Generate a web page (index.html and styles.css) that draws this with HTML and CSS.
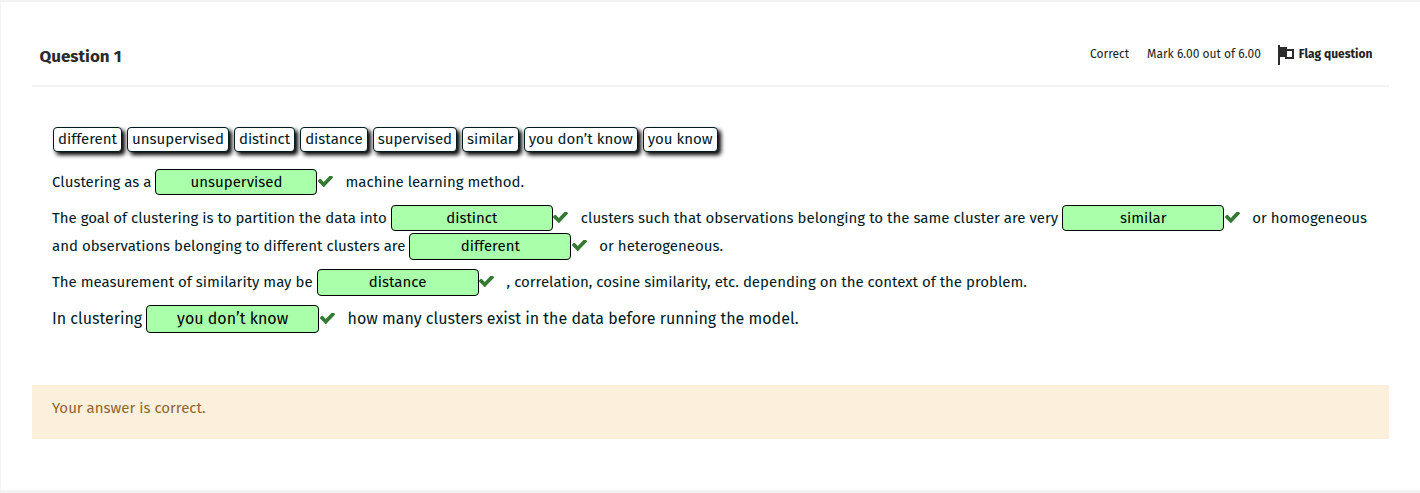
FILE: index.html
```
<!DOCTYPE html>
<html lang="en">
<head>
<meta charset="utf-8">
<title>Question 1</title>
<link rel="stylesheet" href="styles.css">
</head>
<body>
<svg class="defs" aria-hidden="true"><symbol id="check" viewBox="121 434 1550 1188" preserveAspectRatio="none"><path d="M1671 566q0 40-28 68l-724 724-136 136q-28 28-68 28t-68-28l-136-136-362-362q-28-28-28-68t28-68l136-136q28-28 68-28t68 28l294 295 656-657q28-28 68-28t68 28l136 136q28 28 28 68z" fill="#357a32"/></symbol></svg>
<main class="question">
  <header class="head">
    <h1 class="title">Question 1</h1>
    <div class="info">
      <span class="state">Correct</span>
      <span class="grade">Mark 6.00 out of 6.00</span>
      <a class="flag"><svg class="flag-icon" viewBox="0 0 16 20"><path d="M0 0H2V2H9V4H16V14H7V12H2V20H0Z" fill="#2b2b2b"/><path d="M9 6H14V12H9Z" fill="#fff"/></svg>Flag question</a>
    </div>
  </header>
  <section class="content">
    <div class="choices">
      <span class="choice">different</span>
      <span class="choice">unsupervised</span>
      <span class="choice">distinct</span>
      <span class="choice">distance</span>
      <span class="choice">supervised</span>
      <span class="choice">similar</span>
      <span class="choice">you don’t know</span>
      <span class="choice">you know</span>
    </div>
    <p class="line"><span>Clustering as a</span><span class="drop">unsupervised</span><svg class="check"><use href="#check"/></svg><span>machine learning method.</span></p>
    <div class="para">
      <p class="line"><span>The goal of clustering is to partition the data into</span><span class="drop">distinct</span><svg class="check"><use href="#check"/></svg><span>clusters such that observations belonging to the same cluster are very</span><span class="drop">similar</span><svg class="check"><use href="#check"/></svg><span>or homogeneous</span></p>
      <p class="line tall"><span>and observations belonging to different clusters are</span><span class="drop">different</span><svg class="check"><use href="#check"/></svg><span>or heterogeneous.</span></p>
    </div>
    <p class="line tall"><span>The measurement of similarity may be</span><span class="drop">distance</span><svg class="check"><use href="#check"/></svg><span>, correlation, cosine similarity, etc. depending on the context of the problem.</span></p>
    <p class="line large"><span>In clustering</span><span class="drop">you don’t know</span><svg class="check"><use href="#check"/></svg><span>how many clusters exist in the data before running the model.</span></p>
  </section>
  <section class="feedback">Your answer is correct.</section>
</main>
</body>
</html>
```

FILE: styles.css
```
* { box-sizing: border-box; }
body { margin: 0; background: #f1f1f1; font-family: "Fira Sans", "Noto Sans", sans-serif; font-size: 15px; color: #001a1e; }
.defs { position: absolute; width: 0; height: 0; }
.question { height: 493px; border: solid #f2f2f2; border-width: 2px 0 3px 1px; background: #fff; padding: 0 31px; }
.head { display: flex; justify-content: space-between; height: 85px; border-bottom: 2px solid #f3f3f3; padding: 0 16.6px 0 7.5px; white-space: nowrap; }
.title { margin: 44px 0 0; font-size: 17px; line-height: 22px; font-weight: 700; color: #2b2b2b; }
.info { display: flex; margin-top: 42px; font-size: 12px; line-height: 20px; color: #222; }
.grade { margin-left: 18px; }
.flag { display: flex; margin-left: 17px; font-weight: 700; }
.flag-icon { width: 16px; height: 20px; margin: 1px 5px 0 0; }
.content { padding: 40px 20px 0; height: 298px; }
.choices { display: flex; gap: 5px; padding-left: 1px; margin-bottom: 17px; }
.choice { height: 25px; padding: 0 4px; border: 1px solid #001a1e; border-radius: 4px; background: #fff; box-shadow: 3px 3px 4px #000; line-height: 23px; white-space: nowrap; }
.line { display: flex; align-items: flex-start; margin: 0 0 10px; height: 26px; line-height: 26px; white-space: nowrap; }
.para { margin-bottom: 9px; }
.para .line { margin-bottom: 2px; }
.para .tall { margin-bottom: 0; }
.tall { height: 27px; margin-bottom: 9px; }
.drop { width: 162px; height: 100%; margin-left: 4px; border: 1px solid #000; border-radius: 4px; background: #afa; color: #000; text-align: center; line-height: 24px; flex: none; }
.check { width: 15px; height: 12px; margin: 7px 13px 0 0.5px; flex: none; }
.check + span { margin-left: -0.5px; }
.large { height: 28px; line-height: 28px; font-size: 16px; }
.large .drop { width: 173px; line-height: 26px; }
.large .check { margin-top: 8px; }
.large .check + span { margin-left: 0; }
.feedback { height: 54px; padding: 12px 20px; background: #fcefdc; color: #8e662e; line-height: 22px; }
```
